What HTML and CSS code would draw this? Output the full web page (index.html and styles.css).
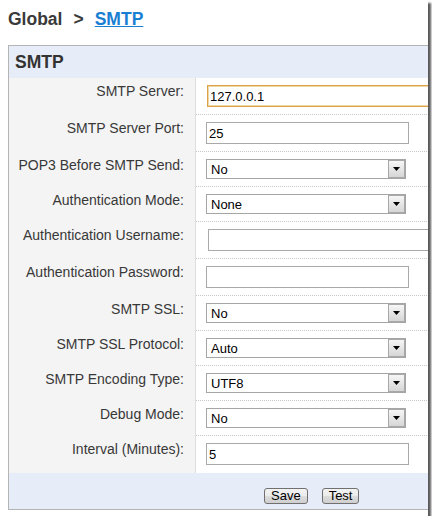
FILE: index.html
```html
<!DOCTYPE html>
<html>
<head>
<meta charset="utf-8">
<title>SMTP</title>
<link rel="stylesheet" href="styles.css">
</head>
<body>
<div class="shot">
  <h1 class="crumbs"><span>Global</span><span class="crumb-sep">&gt;</span><a href="#" class="crumb-link">SMTP</a></h1>
  <div class="panel">
    <div class="panel-head">SMTP</div>
    <div class="form">
      <label class="lbl">SMTP Server:</label>
      <div class="fld"><input class="txt txt-wide txt-focus" type="text" value="127.0.0.1"></div>

      <label class="lbl">SMTP Server Port:</label>
      <div class="fld"><input class="txt" type="text" value="25"></div>

      <label class="lbl">POP3 Before SMTP Send:</label>
      <div class="fld"><span class="combo"><select><option>No</option></select><span class="combo-btn"><svg width="7" height="4" viewBox="0 0 7 4"><path d="M0 0H7L3.5 4Z" fill="#000"/></svg></span></span></div>

      <label class="lbl">Authentication Mode:</label>
      <div class="fld"><span class="combo"><select><option>None</option></select><span class="combo-btn"><svg width="7" height="4" viewBox="0 0 7 4"><path d="M0 0H7L3.5 4Z" fill="#000"/></svg></span></span></div>

      <label class="lbl">Authentication Username:</label>
      <div class="fld"><input class="txt txt-wide txt-shift" type="text" value=""></div>

      <label class="lbl">Authentication Password:</label>
      <div class="fld"><input class="txt" type="password" value=""></div>

      <label class="lbl">SMTP SSL:</label>
      <div class="fld"><span class="combo"><select><option>No</option></select><span class="combo-btn"><svg width="7" height="4" viewBox="0 0 7 4"><path d="M0 0H7L3.5 4Z" fill="#000"/></svg></span></span></div>

      <label class="lbl">SMTP SSL Protocol:</label>
      <div class="fld"><span class="combo"><select><option>Auto</option></select><span class="combo-btn"><svg width="7" height="4" viewBox="0 0 7 4"><path d="M0 0H7L3.5 4Z" fill="#000"/></svg></span></span></div>

      <label class="lbl">SMTP Encoding Type:</label>
      <div class="fld"><span class="combo"><select><option>UTF8</option></select><span class="combo-btn"><svg width="7" height="4" viewBox="0 0 7 4"><path d="M0 0H7L3.5 4Z" fill="#000"/></svg></span></span></div>

      <label class="lbl">Debug Mode:</label>
      <div class="fld"><span class="combo"><select><option>No</option></select><span class="combo-btn"><svg width="7" height="4" viewBox="0 0 7 4"><path d="M0 0H7L3.5 4Z" fill="#000"/></svg></span></span></div>

      <label class="lbl">Interval (Minutes):</label>
      <div class="fld fld-last"><input class="txt" type="text" value="5"></div>
    </div>
    <div class="panel-foot">
      <button class="btn" type="button">Save</button>
      <button class="btn" type="button">Test</button>
    </div>
  </div>
</div>
</body>
</html>
```

FILE: styles.css
```css
html, body {
  margin: 0;
  padding: 0;
  background: #fff;
}

body {
  font-family: "Liberation Sans", Arial, sans-serif;
  color: #333;
}

.shot {
  width: 428px;
  height: 516px;
  overflow: hidden;
  background: #fff;
  box-shadow: 3px 3px 2px rgba(0, 0, 0, 0.65);
}

.crumbs {
  margin: 9px 0 16px 8px;
  font-size: 17.5px;
  line-height: 20px;
  font-weight: bold;
  color: #3a3a3a;
  white-space: nowrap;
}

.crumb-sep {
  margin: 0 11px;
}

.crumb-link {
  color: #1a7fd2;
  text-decoration: underline;
}

.panel {
  width: 560px;
  margin-left: 8px;
  border: 1px solid #b4b4b4;
  border-right: 0;
}

.panel-head {
  background: #e7edf8;
  height: 32px;
  box-sizing: border-box;
  padding: 6px 0 0 6px;
  font-size: 17.5px;
  line-height: 20px;
  font-weight: bold;
  color: #333;
}

.form {
  display: grid;
  grid-template-columns: 187px 1fr;
}

.lbl {
  background: #f4f4f4;
  border-right: 1px solid #dedede;
  box-sizing: border-box;
  padding: 5px 11px 0 0;
  text-align: right;
  font-size: 14px;
  line-height: 16px;
  color: #383838;
  white-space: nowrap;
}

.fld {
  padding: 7px 0 7px 10px;
  border-bottom: 1px dotted #c8c8c8;
  display: flex;
  align-items: flex-start;
}

.fld-last {
  border-bottom: 0;
  padding-bottom: 8px;
}

.txt {
  display: block;
  box-sizing: border-box;
  width: 203px;
  height: 22px;
  margin: 0;
  padding: 0 2px;
  border: 1px solid #a9a9a9;
  font-family: "Liberation Sans", Arial, sans-serif;
  font-size: 13px;
  color: #000;
  background: #fff;
  outline: none;
}

.txt-wide {
  width: 300px;
}

.txt-focus {
  margin-left: 1px;
  border-color: #dba24a;
  box-shadow: inset 0 0 0 1px #f0d7a6;
}

.txt-shift {
  margin-left: 2px;
}

.combo {
  display: flex;
  box-sizing: border-box;
  width: 200px;
  height: 20px;
  border: 1px solid #a5a5a5;
  background: #fff;
}

.combo select {
  -webkit-appearance: none;
  appearance: none;
  flex: 1;
  min-width: 0;
  height: 18px;
  margin: 0;
  padding: 0 0 0 4px;
  border: 0;
  background: transparent;
  font-family: "Liberation Sans", Arial, sans-serif;
  font-size: 13px;
  color: #000;
  outline: none;
}

.combo-btn {
  display: flex;
  align-items: center;
  justify-content: center;
  box-sizing: border-box;
  width: 17px;
  height: 18px;
  border: 1px solid #a8a8a8;
  background: linear-gradient(#f6f6f6, #e6e6e6 50%, #d6d6d6);
}

.panel-foot {
  background: #e7edf8;
  padding: 15px 0 5px 255px;
  display: flex;
  gap: 14px;
}

.btn {
  box-sizing: border-box;
  height: 16px;
  margin: 0;
  padding: 0 6px;
  border: 1px solid #707070;
  border-radius: 3px;
  background: linear-gradient(#f3f3f3, #ebebeb 50%, #dddddd 50%, #cfcfcf);
  font-family: "Liberation Sans", Arial, sans-serif;
  font-size: 13px;
  line-height: 14px;
  color: #000;
}
```
